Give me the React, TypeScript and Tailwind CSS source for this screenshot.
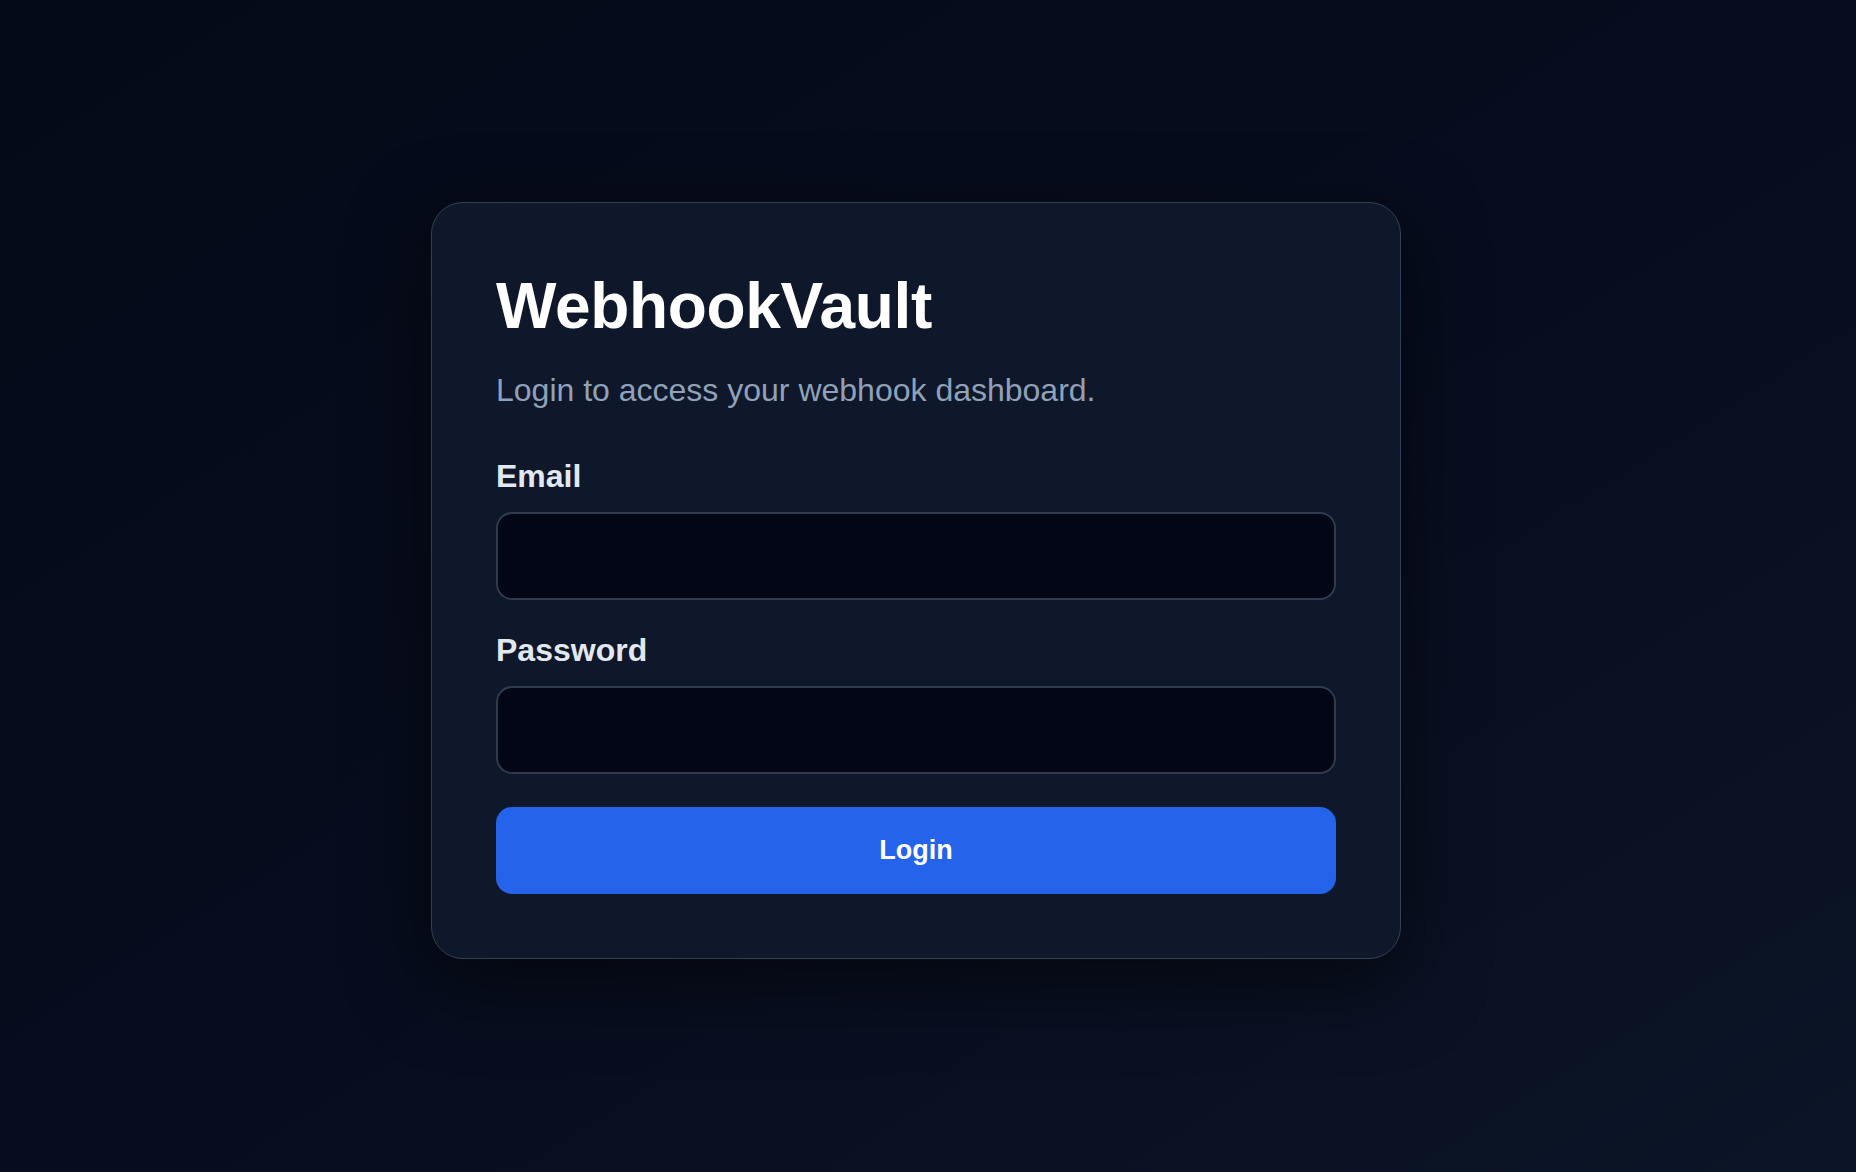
const Field = ({ label, type, className }: { label: string; type: string; className?: string }) => {
  return (
    <label className={`block ${className ?? ''}`}>
      <span className="block text-[32px] leading-[46px] font-bold text-slate-200">{label}</span>
      <input
        type={type}
        className="mt-[13px] block h-[88px] w-full rounded-[16px] border-2 border-[#303b4d] bg-[#020617] px-6 text-[28px] text-slate-100 outline-none"
      />
    </label>
  )
}

export default function App() {
  return (
    <div
      className="flex min-h-[1172px] w-full items-center justify-center bg-linear-to-br from-[#050a18] via-[#070d1e] to-[#0c1427] pr-[24px] pb-[12px]"
      style={{ fontFamily: '"Liberation Sans", Arial, Helvetica, sans-serif' }}
    >
      <div className="w-[970px] rounded-[32px] border border-[#344155] bg-[#0f172a] px-16 pt-16 pb-16 shadow-[0_24px_80px_rgba(0,0,0,0.55)]">
        <h1 className="text-[64px] leading-[78px] font-bold tracking-[-0.005em] text-white">WebhookVault</h1>
        <p className="mt-[22px] text-[32px] leading-[46px] text-slate-400">
          Login to access your webhook dashboard.
        </p>
        <form className="mt-[40px]" onSubmit={(e) => e.preventDefault()}>
          <Field label="Email" type="email" />
          <Field label="Password" type="password" className="mt-[27px]" />
          <button
            type="submit"
            className="mt-[33px] block h-[87px] w-full rounded-[16px] bg-[#2563eb] text-[27px] font-bold text-white"
          >
            Login
          </button>
        </form>
      </div>
    </div>
  )
}
